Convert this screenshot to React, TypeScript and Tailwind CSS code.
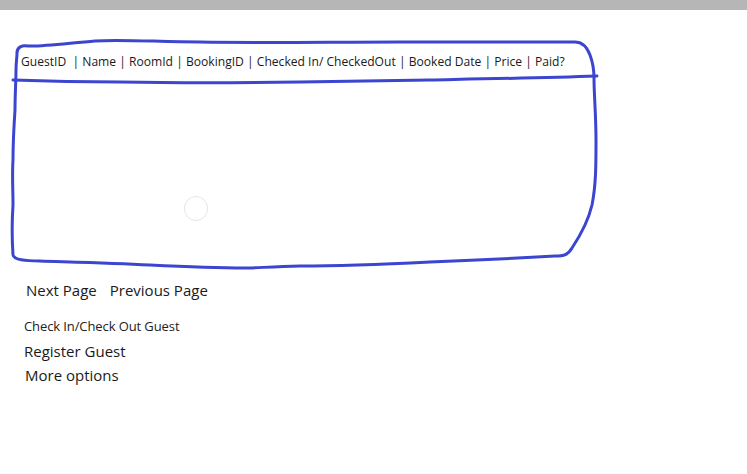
import React from 'react';

const SketchOutline: React.FC = () => (
  <svg
    className="absolute left-0 top-0 pointer-events-none"
    width={747}
    height={280}
    viewBox="0 0 747 280"
    fill="none"
    stroke="#3b45d0"
    strokeWidth={3}
    strokeLinecap="round"
    strokeLinejoin="round"
  >
    {/* outer box */}
    <path d="M17 53 C17 47 22 45 28 46 C40 47 70 43 95 41 C120 39 160 42 200 42 C260 43 330 42 400 42 C470 42 530 42 575 42 C583 42 587 47 590 55 C593 63 594 70 594 78 C594 95 596 115 596 140 C596 165 596 185 592 205 C588 222 580 236 572 248 C568 255 564 256 555 256 C520 258 480 260 430 262 C390 264 340 266 300 266 C270 267 250 268 245 268 C220 268 190 267 150 265 C110 263 70 262 40 261 C25 261 14 260 13 255 C12 240 12 220 13 205 C13 190 12 175 13 160 C13 140 14 125 15 110 C15 95 16 80 16 70 C16 62 17 58 17 53" />
    {/* header divider */}
    <path d="M13 80 C40 81 80 82 120 82 C170 83 240 83 300 82 C350 81 390 81 430 80 C480 79 540 78 597 76" />
  </svg>
);

export default function App() {
  return (
    <div className="relative w-[747px] h-[474px] bg-white overflow-hidden font-['Open_Sans','Noto_Sans',sans-serif] text-[#1a1a1a]">
      <div className="h-[10px] bg-[#b5b6b5]" />
      <SketchOutline />

      <div className="pt-[44px] pl-[21px] text-[12.1px] leading-[16px] whitespace-pre">
        {'GuestID  | Name | RoomId | BookingID | Checked In/ CheckedOut | Booked Date | Price | Paid?'}
      </div>

      {/* empty table body with loading ring */}
      <div className="h-[210px] relative">
        <div className="absolute left-[184px] top-[126px] w-[24px] h-[25px] rounded-full border border-[#e6e6e6]" />
      </div>

      <div className="flex gap-[13px] pl-[26px] text-[15px] leading-[20px]">
        <span>Next Page</span>
        <span>Previous Page</span>
      </div>

      <div className="pl-[24px] pt-[17px] flex flex-col">
        <span className="text-[13px] leading-[18px] tracking-[-0.1px] text-[#222]">Check In/Check Out Guest</span>
        <span className="text-[15px] leading-[24px] mt-[4px]">Register Guest</span>
        <span className="text-[15px] leading-[24px] pl-[1px]">More options</span>
      </div>
    </div>
  );
}
